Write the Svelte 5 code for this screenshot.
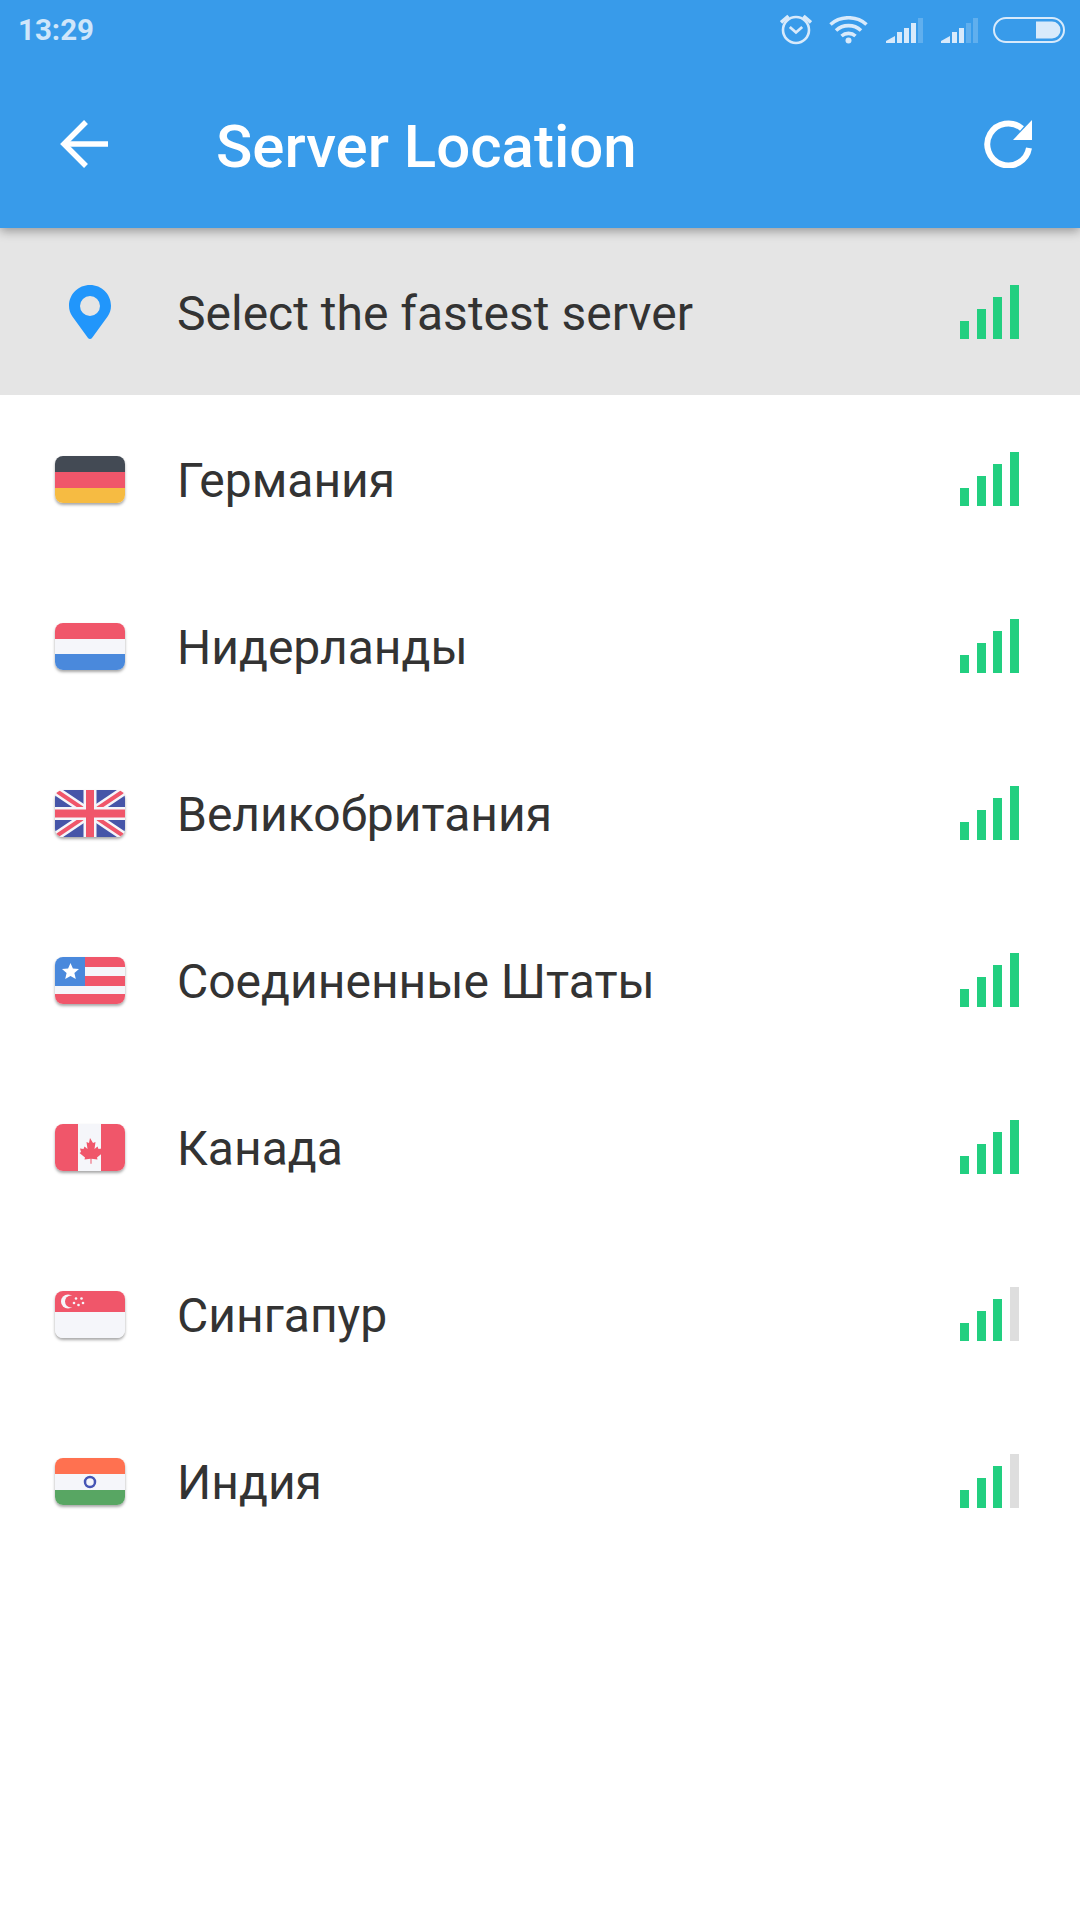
<script>
  const rows = [
    { flag: 'pin', name: 'Select the fastest server', bars: 4 },
    { flag: 'de', name: 'Германия', bars: 4 },
    { flag: 'nl', name: 'Нидерланды', bars: 4 },
    { flag: 'gb', name: 'Великобритания', bars: 4 },
    { flag: 'us', name: 'Соединенные Штаты', bars: 4 },
    { flag: 'ca', name: 'Канада', bars: 4 },
    { flag: 'sg', name: 'Сингапур', bars: 3 },
    { flag: 'in', name: 'Индия', bars: 3 }
  ];
  const R = '#f0566a', W = '#f5f6fa', B = '#4a89dc';
</script>

<div class="page">
  <header>
    <div class="status">
      <span class="time">13:29</span>
      <div class="sysicons">
        <svg width="32" height="32" viewBox="0 0 32 32" fill="none" stroke="#d8eafb" stroke-width="2.6">
          <circle cx="16" cy="17" r="13"/>
          <path d="M9.800 14l6.200 5.500 6.200-5.500" stroke-width="2.800"/>
          <path d="M1 9.500l7.500-6.500M31 9.500L23.500 3" stroke-width="3.600"/>
        </svg>
        <svg class="wifi" width="39" height="28" viewBox="0 0 39 28" fill="none" stroke="#d8eafb" stroke-width="3.6">
          <path d="M1.500 8.500C11.500 -0.500 27.500 -0.500 37.500 8.500"/>
          <path d="M7 14.500C14 8 25 8 32 14.500"/>
          <path d="M12.500 20C16.500 16.500 22.500 16.500 26.500 20" />
          <circle cx="19.500" cy="24.500" r="3" fill="#d8eafb" stroke="none"/>
        </svg>
        <svg class="cell" width="37" height="25" viewBox="0 0 37 25">
          <path d="M0 25V23L9 18V25z" fill="#d8eafb"/>
          <rect x="11" y="14" width="5" height="11" fill="#d8eafb"/>
          <rect x="18" y="10" width="5" height="15" fill="#d8eafb"/>
          <rect x="25" y="5" width="5" height="20" fill="#d8eafb"/>
          <rect x="32" y="0" width="5" height="25" fill="#d8eafb" opacity=".25"/>
        </svg>
        <svg class="cell2" width="37" height="25" viewBox="0 0 37 25">
          <path d="M0 25V23L9 18V25z" fill="#d8eafb"/>
          <rect x="11" y="14" width="5" height="11" fill="#d8eafb"/>
          <rect x="18" y="10" width="5" height="15" fill="#d8eafb"/>
          <rect x="25" y="5" width="5" height="20" fill="#d8eafb" opacity=".25"/>
          <rect x="32" y="0" width="5" height="25" fill="#d8eafb" opacity=".25"/>
        </svg>
        <svg class="batt" width="72" height="26" viewBox="0 0 72 26">
          <rect x="1" y="1" width="70" height="24" rx="12" fill="none" stroke="#d8eafb" stroke-width="2"/>
          <path d="M43 4.500H59a8.500 8.500 0 0 1 0 17H43z" fill="#d8eafb"/>
        </svg>
      </div>
    </div>
    <div class="toolbar">
      <svg class="back" width="48" height="48" viewBox="0 0 48 48" fill="none" stroke="#fff" stroke-width="5.500">
        <path d="M48 24H3"/>
        <path d="M26 2L4 24l22 22"/>
      </svg>
      <h1>Server Location</h1>
      <svg class="refresh" width="48" height="48" viewBox="0 0 48 48">
        <path d="M45 28A21 21 0 1 1 38 8.500" fill="none" stroke="#fff" stroke-width="6"/>
        <path d="M48 0V20H29z" fill="#fff"/>
      </svg>
    </div>
  </header>

  <ul>
    {#each rows as row, i}
      <li class:active={i === 0}>
        <span class="lead">
          {#if row.flag === 'pin'}
            <svg width="42" height="54" viewBox="0 0 42 54">
              <path fill-rule="evenodd" fill="#2196fb" d="M21 0C9.400 0 0 9.200 0 20.800c0 4.200 1.200 7.600 3.400 10.800L19 53c1 1.300 3 1.300 4 0l15.600-21.400c2.200-3.200 3.400-6.600 3.400-10.800C42 9.200 32.600 0 21 0zm0 11a10 10 0 1 1 0 20 10 10 0 0 1 0-20z"/>
            </svg>
          {:else}
            <span class="flag">
              <svg width="70" height="47" viewBox="0 0 70 47">
                {#if row.flag === 'de'}
                  <rect width="70" height="16" fill="#434a54"/>
                  <rect y="16" width="70" height="16" fill={R}/>
                  <rect y="32" width="70" height="15" fill="#f6bb42"/>
                {:else if row.flag === 'nl'}
                  <rect width="70" height="16" fill={R}/>
                  <rect y="16" width="70" height="15" fill={W}/>
                  <rect y="31" width="70" height="16" fill={B}/>
                {:else if row.flag === 'gb'}
                  <rect width="70" height="47" fill="#4655a8"/>
                  <path d="M0 0L70 47M70 0L0 47" stroke={W} stroke-width="9"/>
                  <path d="M0 0L70 47M70 0L0 47" stroke={R} stroke-width="4"/>
                  <path d="M35 0V47M0 23.500H70" stroke={W} stroke-width="13"/>
                  <path d="M35 0V47M0 23.500H70" stroke={R} stroke-width="8"/>
                {:else if row.flag === 'us'}
                  <rect width="70" height="47" fill={R}/>
                  <rect y="10" width="70" height="9" fill={W}/>
                  <rect y="29" width="70" height="8" fill={W}/>
                  <rect width="30" height="29" fill={B}/>
                  <path fill="#fff" d="M15.500 6l2.400 5.600 6.100.5-4.600 4 1.400 6-5.300-3.200-5.300 3.200 1.400-6-4.600-4 6.100-.5z"/>
                {:else if row.flag === 'ca'}
                  <rect width="70" height="47" fill={R}/>
                  <rect x="23" width="23" height="47" fill={W}/>
                  <path fill={R} d="M35 14l3 5 2.500-1-1 7 3-2.500 1 2.500 3.500-.5-1 3.500 1.500 1-5.500 4.500.5 2-6-.8v5h-1v-5l-6 .8.500-2-5.500-4.500 1.500-1-1-3.500 3.500.5 1-2.500 3 2.500-1-7 2.500 1z"/>
                {:else if row.flag === 'sg'}
                  <rect width="70" height="21" fill={R}/>
                  <rect y="21" width="70" height="26" fill={W}/>
                  <circle cx="13" cy="10.500" r="7" fill={W}/>
                  <circle cx="16" cy="10.500" r="6" fill={R}/>
                  <g fill={W}>
                    <circle cx="21" cy="7.500" r="1.300"/><circle cx="26.500" cy="7.500" r="1.300"/>
                    <circle cx="19" cy="12" r="1.300"/><circle cx="28" cy="12" r="1.300"/>
                    <circle cx="23.500" cy="14" r="1.300"/>
                  </g>
                {:else}
                  <rect width="70" height="16" fill="#ff7150"/>
                  <rect y="16" width="70" height="16" fill={W}/>
                  <rect y="32" width="70" height="15" fill="#58a663"/>
                  <circle cx="35" cy="24" r="5" fill="none" stroke="#4655b5" stroke-width="2.500"/>
                {/if}
              </svg>
            </span>
          {/if}
        </span>
        <span class="name">{row.name}</span>
        <span class="bars">
          {#each [18, 30, 42, 54] as h, b}
            <span class="bar" class:off={b >= row.bars} style="height:{h}px"></span>
          {/each}
        </span>
      </li>
    {/each}
  </ul>
</div>

<style>
  :global(body) { margin: 0; background: #fff; }
  .page { width: 1080px; height: 1920px; background: #fff; font-family: Roboto, "Noto Sans", sans-serif; overflow: hidden; }
  header { height: 228px; background: #389bea; box-shadow: 0 3px 10px rgba(0,0,0,.35); position: relative; z-index: 1; }
  .status { height: 60px; display: flex; align-items: flex-start; justify-content: space-between; padding: 0 15px 0 18px; }
  .time { font-size: 29.500px; font-weight: 700; color: #cfe6fa; line-height: 61px; }
  .sysicons { display: flex; align-items: flex-start; padding-top: 13px; }
  .wifi { margin: 3px 0 0 17px; }
  .cell { margin: 5px 0 0 18px; }
  .cell2 { margin: 5px 0 0 18px; }
  .batt { margin: 4px 0 0 15px; }
  .toolbar { height: 168px; display: flex; align-items: center; padding: 0 48px 0 60px; }
  h1 { margin: 5px 0 0 108px; flex: 1; font-size: 60px; font-weight: 500; color: #fff; }
  svg { display: block; }
  ul { list-style: none; margin: 0; padding: 0; }
  li { height: 167px; display: flex; align-items: center; padding: 0 61px 0 55px; }
  li.active { background: #e5e5e5; }
  .lead { width: 70px; display: flex; justify-content: center; margin-right: 52px; }
  .flag { display: block; width: 70px; height: 47px; margin-top: 2px; border-radius: 8px; overflow: hidden; box-shadow: 0 2px 3px rgba(0,0,0,.35); }
  .flag svg { filter: blur(.4px); }
  .name { flex: 1; font-size: 48px; color: #333; padding-top: 3px; }
  .bars { display: flex; align-items: flex-end; }
  .bar { width: 9px; margin-left: 8px; background: #22cf80; }
  .bar:nth-child(3) { margin-left: 7px; }
  .bar.off { background: #dedede; }
</style>
